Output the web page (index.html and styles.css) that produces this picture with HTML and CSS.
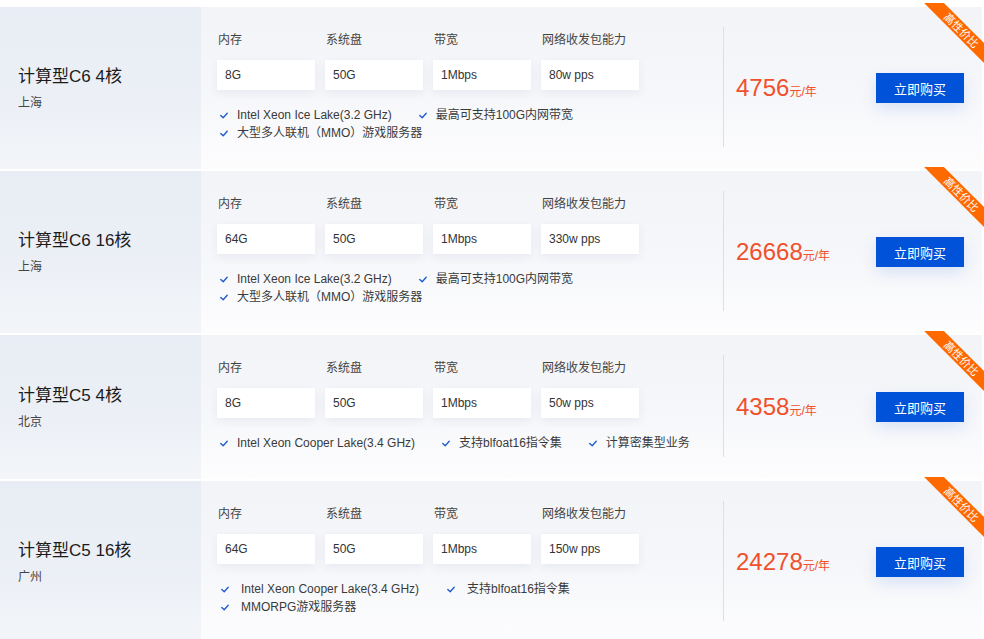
FILE: index.html
```html
<!DOCTYPE html>
<html lang="zh-CN">
<head>
<meta charset="utf-8">
<title>计算型实例</title>
<link rel="stylesheet" href="styles.css">
</head>
<body>
<div class="list">

  <div class="card">
    <div class="card-side">
      <div class="card-title">计算型C6 4核</div>
      <div class="card-region">上海</div>
    </div>
    <div class="card-main">
      <div class="specs">
        <div class="spec"><div class="spec-label">内存</div><div class="spec-box">8G</div></div>
        <div class="spec"><div class="spec-label">系统盘</div><div class="spec-box">50G</div></div>
        <div class="spec"><div class="spec-label">带宽</div><div class="spec-box">1Mbps</div></div>
        <div class="spec"><div class="spec-label">网络收发包能力</div><div class="spec-box">80w pps</div></div>
      </div>
      <ul class="features">
        <li class="feature"><svg class="check" viewBox="0 0 10 8"><polyline points="1,4 4,6.8 9,1.2"/></svg>Intel Xeon Ice Lake(3.2 GHz)</li>
        <li class="feature"><svg class="check" viewBox="0 0 10 8"><polyline points="1,4 4,6.8 9,1.2"/></svg>最高可支持100G内网带宽</li>
        <li class="feature"><svg class="check" viewBox="0 0 10 8"><polyline points="1,4 4,6.8 9,1.2"/></svg>大型多人联机（MMO）游戏服务器</li>
      </ul>
    </div>
    <div class="card-divider"></div>
    <div class="card-price">
      <div class="price"><span class="price-num">4756</span><span class="price-unit">元/年</span></div>
      <button class="buy-btn">立即购买</button>
    </div>
    <div class="ribbon"><div class="ribbon-band">高性价比</div></div>
  </div>

  <div class="card">
    <div class="card-side">
      <div class="card-title">计算型C6 16核</div>
      <div class="card-region">上海</div>
    </div>
    <div class="card-main">
      <div class="specs">
        <div class="spec"><div class="spec-label">内存</div><div class="spec-box">64G</div></div>
        <div class="spec"><div class="spec-label">系统盘</div><div class="spec-box">50G</div></div>
        <div class="spec"><div class="spec-label">带宽</div><div class="spec-box">1Mbps</div></div>
        <div class="spec"><div class="spec-label">网络收发包能力</div><div class="spec-box">330w pps</div></div>
      </div>
      <ul class="features">
        <li class="feature"><svg class="check" viewBox="0 0 10 8"><polyline points="1,4 4,6.8 9,1.2"/></svg>Intel Xeon Ice Lake(3.2 GHz)</li>
        <li class="feature"><svg class="check" viewBox="0 0 10 8"><polyline points="1,4 4,6.8 9,1.2"/></svg>最高可支持100G内网带宽</li>
        <li class="feature"><svg class="check" viewBox="0 0 10 8"><polyline points="1,4 4,6.8 9,1.2"/></svg>大型多人联机（MMO）游戏服务器</li>
      </ul>
    </div>
    <div class="card-divider"></div>
    <div class="card-price">
      <div class="price"><span class="price-num">26668</span><span class="price-unit">元/年</span></div>
      <button class="buy-btn">立即购买</button>
    </div>
    <div class="ribbon"><div class="ribbon-band">高性价比</div></div>
  </div>

  <div class="card">
    <div class="card-side">
      <div class="card-title">计算型C5 4核</div>
      <div class="card-region">北京</div>
    </div>
    <div class="card-main">
      <div class="specs">
        <div class="spec"><div class="spec-label">内存</div><div class="spec-box">8G</div></div>
        <div class="spec"><div class="spec-label">系统盘</div><div class="spec-box">50G</div></div>
        <div class="spec"><div class="spec-label">带宽</div><div class="spec-box">1Mbps</div></div>
        <div class="spec"><div class="spec-label">网络收发包能力</div><div class="spec-box">50w pps</div></div>
      </div>
      <ul class="features">
        <li class="feature"><svg class="check" viewBox="0 0 10 8"><polyline points="1,4 4,6.8 9,1.2"/></svg>Intel Xeon Cooper Lake(3.4 GHz)</li>
        <li class="feature"><svg class="check" viewBox="0 0 10 8"><polyline points="1,4 4,6.8 9,1.2"/></svg>支持blfoat16指令集</li>
        <li class="feature"><svg class="check" viewBox="0 0 10 8"><polyline points="1,4 4,6.8 9,1.2"/></svg>计算密集型业务</li>
      </ul>
    </div>
    <div class="card-divider"></div>
    <div class="card-price">
      <div class="price"><span class="price-num">4358</span><span class="price-unit">元/年</span></div>
      <button class="buy-btn">立即购买</button>
    </div>
    <div class="ribbon"><div class="ribbon-band">高性价比</div></div>
  </div>

  <div class="card">
    <div class="card-side">
      <div class="card-title">计算型C5 16核</div>
      <div class="card-region">广州</div>
    </div>
    <div class="card-main">
      <div class="specs">
        <div class="spec"><div class="spec-label">内存</div><div class="spec-box">64G</div></div>
        <div class="spec"><div class="spec-label">系统盘</div><div class="spec-box">50G</div></div>
        <div class="spec"><div class="spec-label">带宽</div><div class="spec-box">1Mbps</div></div>
        <div class="spec"><div class="spec-label">网络收发包能力</div><div class="spec-box">150w pps</div></div>
      </div>
      <ul class="features features-wide">
        <li class="feature"><svg class="check" viewBox="0 0 10 8"><polyline points="1,4 4,6.8 9,1.2"/></svg>Intel Xeon Cooper Lake(3.4 GHz)</li>
        <li class="feature"><svg class="check" viewBox="0 0 10 8"><polyline points="1,4 4,6.8 9,1.2"/></svg>支持blfoat16指令集</li>
        <li class="feature"><svg class="check" viewBox="0 0 10 8"><polyline points="1,4 4,6.8 9,1.2"/></svg>MMORPG游戏服务器</li>
      </ul>
    </div>
    <div class="card-divider"></div>
    <div class="card-price">
      <div class="price"><span class="price-num">24278</span><span class="price-unit">元/年</span></div>
      <button class="buy-btn">立即购买</button>
    </div>
    <div class="ribbon"><div class="ribbon-band">高性价比</div></div>
  </div>

</div>
</body>
</html>
```

FILE: styles.css
```css
* { box-sizing: border-box; }

html, body {
  margin: 0;
  padding: 0;
  background: #ffffff;
  overflow: hidden;
}

body {
  font-family: "Liberation Sans", "Noto Sans CJK SC", sans-serif;
  color: #333;
  font-size: 12px;
}

.list {
  padding-top: 7px;
  width: 984px;
  display: flex;
  flex-direction: column;
  gap: 2px;
}

.card {
  position: relative;
  width: 982px;
  display: flex;
  align-items: stretch;
  background: linear-gradient(180deg, #f2f4f8 0%, #f6f7fa 55%, #fdfdfe 100%);
}

.card-side {
  width: 201px;
  flex: none;
  display: flex;
  flex-direction: column;
  justify-content: center;
  padding-left: 18px;
  background: linear-gradient(180deg, #e8ecf4 0%, #ecf0f6 60%, #f3f5f9 100%);
}

.card-title {
  font-size: 17px;
  line-height: 24px;
  color: #1b1b1b;
}

.card-region {
  margin-top: 5px;
  font-size: 12px;
  line-height: 18px;
  color: #444;
}

.card-main {
  width: 522px;
  flex: none;
  padding: 24px 20px 27px 16px;
}

.specs {
  display: flex;
  gap: 10px;
}

.spec {
  width: 98px;
}

.spec-label {
  font-size: 12px;
  line-height: 18px;
  color: #444;
  padding-left: 1px;
}

.spec-box {
  margin-top: 11px;
  height: 30px;
  line-height: 30px;
  padding-left: 8px;
  background: #fff;
  font-size: 12px;
  color: #333;
  box-shadow: 0 3px 10px rgba(40, 60, 110, 0.07);
}

.features {
  list-style: none;
  margin: 16px 0 0 0;
  padding: 0 0 0 3px;
  display: flex;
  flex-wrap: wrap;
  column-gap: 27px;
}

.features-wide {
  padding-left: 4px;
  column-gap: 28px;
}

.features-wide .check {
  margin-right: 12px;
}

.feature {
  line-height: 18px;
  font-size: 12px;
  color: #3a3a3a;
  display: flex;
  align-items: center;
  white-space: nowrap;
}

.check {
  width: 8px;
  height: 7px;
  margin-right: 9px;
  flex: none;
}

.check polyline {
  fill: none;
  stroke: #1e5bd0;
  stroke-width: 1.7;
  stroke-linecap: round;
  stroke-linejoin: round;
}

.card-divider {
  width: 1px;
  flex: none;
  margin: 20px 0 22px;
  background: #dcdfe6;
}

.card-price {
  width: 258px;
  flex: none;
  display: flex;
  align-items: center;
  justify-content: space-between;
  padding: 0 18px 0 12px;
}

.price {
  color: #f0502c;
  white-space: nowrap;
}

.price-num {
  font-size: 24px;
  line-height: 30px;
}

.price-unit {
  font-size: 12px;
}

.buy-btn {
  width: 88px;
  height: 30px;
  border: 0;
  background: #0052d9;
  color: #fff;
  font-family: "Liberation Sans", "Noto Sans CJK SC", sans-serif;
  font-size: 13px;
  padding: 0;
  box-shadow: 0 6px 16px rgba(0, 82, 217, 0.13);
}

.ribbon {
  position: absolute;
  top: -4px;
  right: -2px;
  width: 64px;
  height: 64px;
  overflow: hidden;
}

.ribbon-band {
  position: absolute;
  left: -10px;
  top: 19px;
  width: 100px;
  height: 14px;
  line-height: 14px;
  background: #ff6a00;
  color: #fff;
  font-size: 11px;
  text-align: center;
  transform: rotate(45deg);
  padding-left: 4px;
}
```
